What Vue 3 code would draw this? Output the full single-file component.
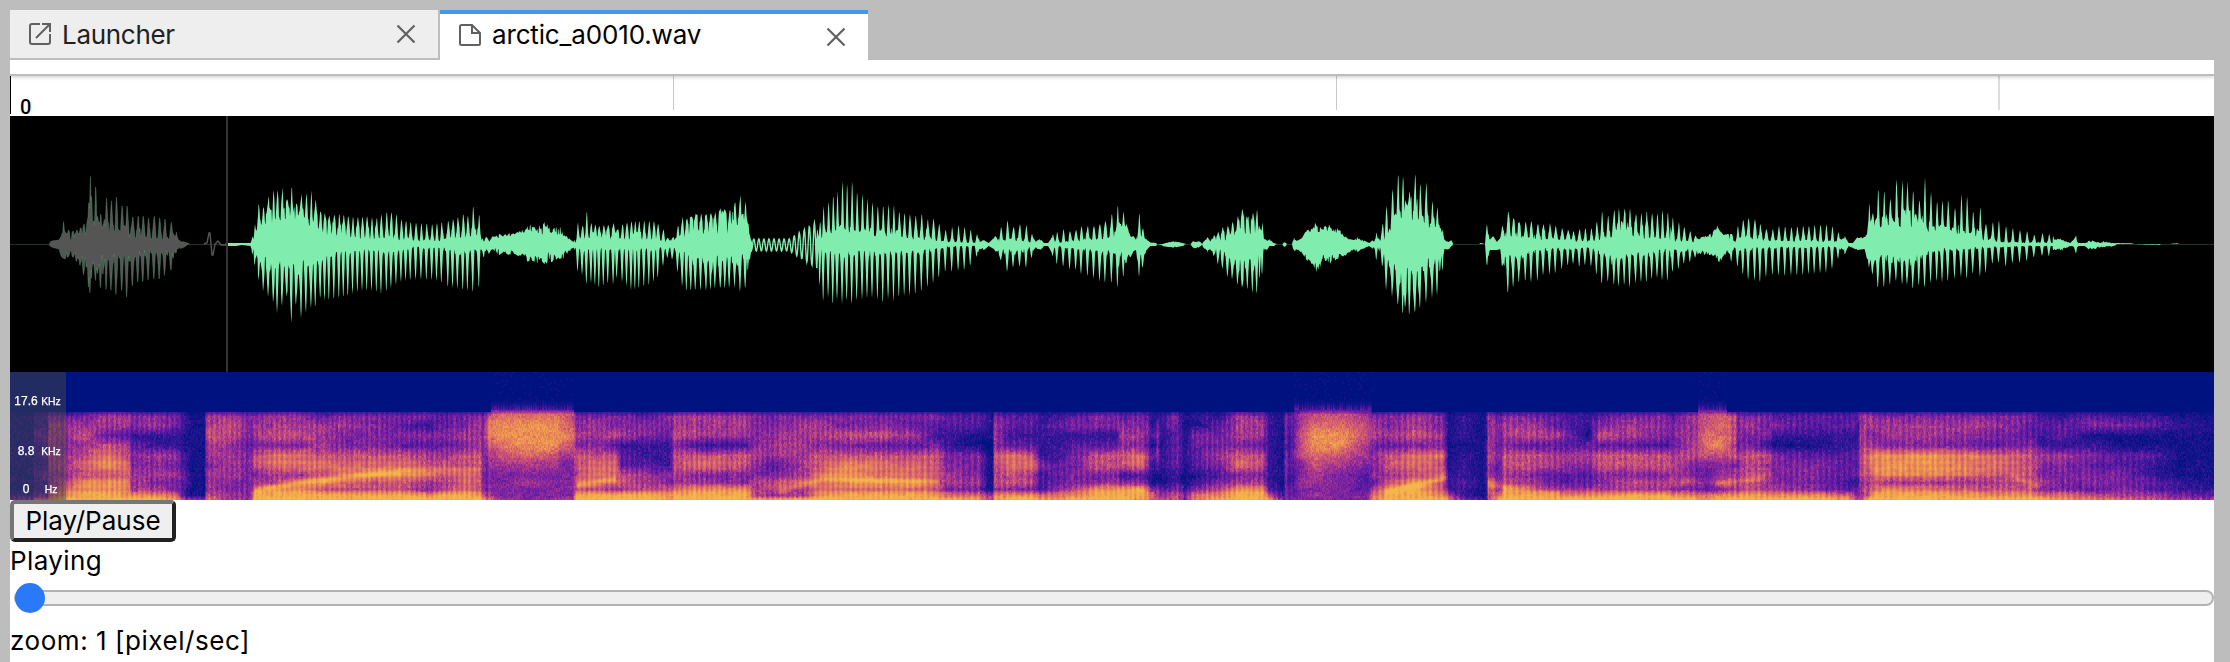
<script setup>
import { ref, onMounted } from 'vue'

const WIDTH = 2204
const waveCanvas = ref(null)
const spectrumCanvas = ref(null)

const ticks = [
  { label: '0', kind: 'first' },
  { label: '', kind: 'thin' },
  { label: '', kind: 'thin' },
  { label: '', kind: 'wide' },
]
const frequencies = [
  { value: '17.6', unit: 'KHz' },
  { value: '8.8', unit: 'KHz' },
  { value: '0', unit: 'Hz' },
]

// Envelope points "position:up/down"; each block has its own start offset.
// Positions are stored in units of 1/2.8 pixel.
const envelopeBlocks = [
  [0, '28:0/0 137:0/0 142:3/2 165:4/4 172:8/12 178:23/14 183:11/14 192:14/12 205:13/12 215:14/17 225:16/21 235:20/31 244:22/20 248:40/47 253:70/48 257:45/30 261:18/18 268:61/38 275:22/25 282:31/46 290:20/25 298:46/48 312:43/45 326:47/50 342:38/45 356:38/53 372:27/40 387:28/37 401:28/37 416:26/35 432:28/34 447:26/34 462:25/30 480:22/25 487:8/9 494:12/8 500:4/3 507:3/4 525:1/0 530:0/0 630:0/0 632:1/1 660:1/1 678:1/0 702:1/1 706:6/10 714:20/22 719:12/8 724:41/40 738:37/47 752:48/52 766:54/58 777:54/70 791:57/60 804:44/50 817:58/80 830:40/58 844:50/75 858:51/67 872:54/63 884:44/62 898:32/52 910:31/56 922:28/55 950:30/53 975:28/51 1002:27/47 1028:28/46 1055:26/47 1068:30/50 1083:32/46 1096:32/43 1110:30/40 1124:25/37 1150:22/35 1210:20/35 1237:22/38 1255:23/42 1282:27/44 1297:30/45 1310:28/46 1325:38/47 1342:30/42 1349:8/6 1355:2/14 1362:9/4 1370:2/10 1378:8/4 1395:14/14 1405:10/8 1440:13/12 1470:14/13 1482:23/21 1500:17/18 1530:25/22 1545:17/22 1560:20/15'],
  [560, '0:23/15 10:9/15 20:8/14 30:4/5 38:2/3 50:22/29 63:18/30 75:33/40 88:21/38 110:18/43 135:19/38 150:21/40 160:14/32 175:20/38 200:23/46 222:23/43 250:23/40 263:23/37 275:20/32 290:15/20 302:6/12 315:6/15 330:18/28 343:27/43 355:25/46 380:30/45 410:30/46 435:32/43 450:36/43 475:33/43 490:42/43 505:49/47 520:42/43 528:20/20 533:6/13 540:0/0 655:0/0 715:0/0 720:15/30 728:22/43 738:38/59 752:42/52 765:48/60 777:53/55 791:63/60 804:60/55 818:63/60 832:52/55 847:50/55 861:46/54 875:42/53 890:38/55 905:38/58 920:40/54 935:39/57 950:32/51 980:30/51 996:28/49 1013:30/46 1030:25/42 1046:26/38 1062:20/32 1080:14/26 1098:17/27 1116:19/26 1133:17/25 1150:14/20 1168:10/11 1176:2/4 1186:4/6 1200:1/1 1215:6/4 1235:17/16 1253:24/28 1270:17/22 1288:20/22 1306:19/23 1322:10/12 1332:2/2 1343:6/7 1355:1/1 1367:1/1 1380:10/12 1392:12/20 1410:15/22 1428:13/25 1445:14/25 1460:18/30 1478:18/31 1495:18/34 1512:20/37 1527:23/38 1545:30/38 1562:40/43'],
  [1120, '0:20/10 10:33/35 20:18/14 30:7/12 38:8/6 45:4/5 54:32/35 65:15/20 75:4/5 85:2/1 100:1/1 105:0/0 118:0/1 150:3/3 175:1/1 185:0/0 198:0/0 205:3/3 213:2/4 222:3/2 230:0/0 235:3/4 245:7/9 255:4/6 263:9/12 275:12/20 288:17/24 302:18/33 315:22/35 330:28/40 343:35/43 358:27/44 372:31/48 384:35/49 392:15/30 399:22/30 405:6/4 412:3/6 418:5/1 430:1/1 440:0/0 455:0/0 460:2/2 468:0/0 482:0/0 486:7/6 495:3/5 510:6/8 520:13/14 535:16/20 545:26/27 550:18/32 565:16/18 584:20/20 600:14/16 612:17/13 625:9/12 640:5/9 655:4/4 665:8/10 680:4/4 698:1/1 706:4/5 712:2/2 718:12/18 725:6/5 735:20/24 746:38/48 763:55/53 779:70/60 793:68/70 800:42/60 811:53/72 827:70/67 841:60/63 858:62/58 875:43/53 889:37/50 898:15/20 904:15/27 908:4/4 920:2/5 928:4/1 933:0/0 1005:0/0 1010:1/0 1022:0/0 1027:21/22 1035:4/5 1045:8/5 1055:2/5 1065:6/4 1070:18/25 1087:33/50 1102:26/42 1118:22/37 1136:22/36 1152:23/38 1170:20/36 1186:20/30 1204:21/30 1220:18/28 1238:16/24 1255:14/20 1270:13/19 1287:15/22 1303:16/20 1320:16/22 1335:22/30 1350:33/40 1367:28/36 1384:34/40 1397:36/42 1413:35/40 1428:36/43 1445:30/38 1475:33/37 1490:31/34 1505:31/33 1519:34/36 1534:32/36 1548:26/28'],
  [1670, '0:20/22 8:27/28 25:22/24 40:17/18 57:13/17 72:8/12 88:8/10 105:9/11 115:11/10 130:20/14 138:14/18 150:9/14 160:10/5 172:10/18 190:18/22 205:24/30 220:26/36 238:25/36 253:20/38 270:15/32 288:15/30 305:18/31 340:17/31 373:18/30 405:19/29 438:20/28 455:18/24 472:12/13 480:4/3 490:8/10 500:1/1 512:1/3 525:7/5 545:7/4 552:10/15 558:42/24 568:30/30 583:55/44 600:53/42 617:45/40 634:65/36 651:64/40 665:63/40 681:53/44 698:43/40 714:67/43 731:52/38 748:42/36 763:44/38 779:44/36 798:36/34 816:50/32 832:48/34 849:32/28 869:37/32 885:20/28 904:22/18 921:24/18 941:18/22 960:16/18 980:14/18 1000:13/16 1020:9/12 1043:11/11 1062:10/11 1085:7/6 1103:5/7 1120:1/1 1130:6/2 1137:9/10 1143:1/1 1160:1/1 1175:4/6 1190:4/5 1205:1/3 1215:4/2 1235:1/2 1250:1/0 1290:1/0 1300:0/0 1370:0/1 1375:0/0 1400:0/0 1420:1/0 1425:0/0 1523:0/0'],
]

// Solid part of the wave: "position:up/down" in page pixels.
const bodyText = '10:1/1 60:10/12 75:9/9 88:16/16 100:17/16 120:18/15 150:11/8 170:10/8 180:2/2 254:5/5 259:29/18 272:30/25 290:32/32 302:28/26 316:24/18 325:22/14 340:16/11 368:13/6 390:15/8 410:8/3 440:6/3 452:14/8 478:14/7 482:5/5 490:6/5 515:9/9 530:15/13 560:13/11 574:2/2 580:9/5 600:12/5 655:11/5 670:3/3 681:14/9 690:25/17 710:25/18 725:28/20 745:31/16 749:7/7 800:3/3 820:6/5 827:14/8 848:17/11 880:12/8 915:14/8 935:9/5 945:4/2 975:3/1 1000:8/8 1020:9/8 1030:4/3 1058:3/2 1082:8/5 1110:14/9 1123:18/12 1140:13/15 1150:1/1 1210:3/3 1230:14/13 1243:26/26 1255:22/16 1264:5/3 1295:4/5 1311:16/17 1328:16/15 1344:8/9 1370:2/2 1382:8/4 1390:20/20 1403:40/38 1417:38/35 1435:22/15 1446:3/3 1487:14/16 1510:20/17 1528:15/8 1550:10/5 1590:5/3 1610:15/15 1625:22/15 1660:10/7 1693:5/5 1710:8/8 1719:16/13 1735:5/3 1745:15/6 1765:8/3 1840:5/2 1863:6/6 1871:20/18 1890:26/14 1910:28/17 1924:22/15 1932:18/6 1960:16/5 1980:12/3 2000:4/2 2030:3/1 2080:1/1 2214:0/0'

function parsePairs(text, offset, scale) {
  return text.split(' ').map((item) => {
    const [pos, pair] = item.split(':')
    const [up, down] = pair.split('/').map(Number)
    return [offset + Number(pos) / scale, up, down]
  })
}

function sample(points, x) {
  let lo = 0
  let hi = points.length - 1
  while (hi - lo > 1) {
    const mid = (lo + hi) >> 1
    if (points[mid][0] <= x) lo = mid
    else hi = mid
  }
  const a = points[lo]
  const b = points[hi]
  const t = Math.max(0, Math.min(1, (x - a[0]) / (b[0] - a[0] || 1)))
  return [a[1] + (b[1] - a[1]) * t, a[2] + (b[2] - a[2]) * t]
}

function hash(x, y) {
  let h = Math.imul(x + 101, 374761393) ^ Math.imul(y + 53, 668265263)
  h = Math.imul(h ^ (h >>> 13), 1274126177)
  return ((h ^ (h >>> 16)) >>> 0) / 4294967296
}

function pitchPeriod(x) {
  if (x < 720) return 5
  if (x < 900) return 5.05
  if (x < 1110) return 5.9
  if (x < 1300) return 4.95
  if (x < 1470) return 5.6
  return 5.9
}

function fricative(x) {
  return (x > 490 && x < 574) || (x > 1293 && x < 1372) || (x > 1697 && x < 1727)
}

// Pulse centres: measured ones, with the wide gaps filled by the pitch period.
function pulseCentres(envelope) {
  const centres = []
  for (let i = 0; i < envelope.length - 1; i++) {
    const [x, up, down] = envelope[i]
    if (up < 9 && down < 9) continue
    centres.push(x)
    const gap = envelope[i + 1][0] - x
    const count = Math.round(gap / pitchPeriod(x))
    for (let n = 1; n < count; n++) centres.push(x + (gap * n) / count)
  }
  return centres
}

function drawWave(canvas) {
  const ctx = canvas.getContext('2d')
  const mid = 128
  const envelope = envelopeBlocks.flatMap(([offset, text]) => parsePairs(text, offset, 2.8))
  const body = parsePairs(bodyText, 0, 1)
  const centres = pulseCentres(envelope)
  ctx.fillStyle = '#000'
  ctx.fillRect(0, 0, WIDTH, 256)
  ctx.fillStyle = '#1d3526'
  ctx.fillRect(0, mid, WIDTH, 1)

  const top = []
  const bottom = []
  let near = 0
  for (let i = 0; i <= WIDTH * 2; i++) {
    const x = 10 + i / 2
    while (near < centres.length - 1 && Math.abs(centres[near + 1] - x) <= Math.abs(centres[near] - x)) near++
    const offset = x - centres[near]
    const side = Math.abs(offset)
    const sideDown = Math.abs(offset + 0.5)
    const [up, down] = sample(envelope, x)
    const cell = Math.floor(x)
    let [bodyUp, bodyDown] = sample(body, x)
    bodyUp = Math.min(up, bodyUp * (0.6 + 0.65 * hash(cell, 3)))
    bodyDown = Math.min(down, bodyDown * (0.55 + 0.75 * hash(cell, 9)))
    let spikeUp = Math.max(0, 1 - Math.max(0, side - 0.2) / 1.35)
    let spikeDown = Math.max(0, 1 - Math.max(0, sideDown - 0.2) / 1.6)
    if (fricative(x)) {
      spikeUp = hash(cell, 5) * 0.75
      spikeDown = hash(cell, 6) * 0.75
    } else if (up < 9 && down < 9) {
      spikeUp = 0.3 + hash(cell, 5) * 0.6
      spikeDown = 0.3 + hash(cell, 6) * 0.6
    }
    const valley = side > 1.9 && side < 4 && up > 8 && up < 34 && !fricative(x)
    const dip = valley ? 0.55 : 1
    top.push([i / 2, mid - bodyUp * dip - (up - bodyUp * dip) * spikeUp])
    bottom.push([i / 2, mid + bodyDown + (down - bodyDown) * spikeDown + (up + down > 1 ? 1 : 0)])
  }

  function paint(from, to, color) {
    ctx.save()
    ctx.beginPath()
    ctx.rect(from, 0, to - from, 256)
    ctx.clip()
    ctx.fillStyle = color
    ctx.strokeStyle = color
    ctx.beginPath()
    top.forEach(([x, y]) => ctx.lineTo(x, y))
    for (let i = bottom.length - 1; i >= 0; i--) ctx.lineTo(bottom[i][0], Math.max(bottom[i][1], top[i][1]))
    ctx.fill()

    // Quiet stretches where the single oscillations are visible.
    ctx.lineWidth = 1.4
    ctx.beginPath()
    const blip = [[194, 128], [197, 127], [199, 117], [200, 117], [202, 139], [203, 139], [205, 128], [208, 125], [211, 129], [217, 129]]
    blip.forEach(([x, y], i) => (i ? ctx.lineTo(x, y) : ctx.moveTo(x, y)))
    ctx.stroke()
    ctx.beginPath()
    for (let x = 740; x <= 807; x += 0.4) {
      const rise = x < 779 ? 6 : 6 + (x - 779) * 0.62
      const y = mid + 1 + Math.sin(((x - 740) / 5.05) * Math.PI * 2) * rise
      if (x === 740) ctx.moveTo(x, y)
      else ctx.lineTo(x, y)
    }
    ctx.stroke()
    ctx.restore()
  }
  paint(0, 216, '#555')
  ctx.globalAlpha = 0.3
  ctx.lineWidth = 1
  ctx.strokeStyle = '#5fae80'
  ctx.beginPath()
  top.slice(85, 360).forEach(([x, y]) => ctx.lineTo(x, y))
  ctx.stroke()
  ctx.beginPath()
  bottom.slice(85, 360).forEach(([x, y]) => ctx.lineTo(x, y))
  ctx.stroke()
  ctx.globalAlpha = 1
  paint(218, WIDTH, '#80edae')
  ctx.fillStyle = '#333'
  ctx.fillRect(216, 0, 2, 256)
}

// Energy columns, one digit per frequency band from high to low.
const energyRows = [20, 30, 40, 50, 60, 70, 80, 87, 94, 100, 104].map((y) => y + 23)
const energyBlocks = [
  [0, '28:11111111124 92:11111111124 95:22322232236 132:22322232236 135:45555544567 185:35545556789 240:45656768899 300:55367868899 355:55356768789 370:44234455589 430:45225454589 490:44225454478 520:22112233225 535:11111111114 572:11111111114 576:55655455567 640:56655554455 700:44434444445 712:45546645799 760:55647755899 830:55647757899 900:35556768699 960:45446777699 1050:44446786699 1130:43436786699 1200:42435675489 1230:33435665599 1300:44546677799 1345:45556666689 1352:34444444468 1363:67765444457 1400:78876544445 1480:78887545444 1560:78886544445'],
  [560, '0:77875444445 35:66765444445 45:44546667699 100:45546777699 155:44636777599 170:44523366599 240:34422355699 305:44322244688 320:55646655799 400:55526745899 520:55526644899 545:44445445558 600:44555346658 680:45555557559 720:45546677789 800:44646888799 900:44636778799 1000:43536778799 1060:43246666689 1080:33224455479 1170:33114445478 1200:22101111156 1210:11101111155 1214:45556656588 1260:33237766489 1325:33236756489 1345:22222422278 1380:23222333478 1450:34234444689 1500:44236644899 1560:44236645899'],
  [1120, '0:34546624899 60:44547734998 75:34435523788 90:21313211476 105:23434311456 115:22212211356 150:44333322466 164:33333322466 180:11112111244 205:21433312477 280:23445434689 330:55546745899 400:45536645899 415:22222222368 455:11111111124 463:44434443444 475:33223322334 505:55666445444 540:67887655454 620:67886544444 690:56655433344 705:45544443577 750:44536656899 830:55647768999 905:44547676689 918:11111122267 960:22212223224 1015:11111111112 1026:22222222222 1030:55556558766 1060:34434335478 1075:45546656899 1150:45636645699 1230:33535533589 1310:22135433589 1340:34636644589 1440:45536646599 1535:44426645599'],
  [1670, '0:34435656489 60:55556446489 100:66776434378 140:67786456489 180:66656456589 190:44435455589 215:45446666699 275:44426565589 290:34214444589 400:33213444489 500:33223332378 527:32223332345 532:55656665556 560:55457765679 570:45458886799 600:45548885899 750:45548885799 900:45437775689 1010:43346666689 1040:23225445479 1100:23325444478 1180:34124344367 1260:24113344457 1350:23113223356 1420:12111112245 1523:11111111235'],
]
// Rising or falling formant tracks: [x0, y0, x1, y1, strength].
const formants = [
  [255, 118, 292, 111, 1.6], [292, 111, 400, 99, 1.6], [400, 99, 480, 97, 1],
  [577, 113, 616, 106, 1.4], [780, 118, 820, 108, 1.2], [820, 106, 940, 110, 1.2],
  [1385, 120, 1446, 105, 1.6], [1490, 113, 1560, 121, 1], [1715, 112, 1765, 105, 1.2],
  [1870, 104, 2010, 104, -0.6], [2015, 106, 2040, 114, 1.1],
]
const palette = [
  [0, 18, 128], [28, 20, 140], [62, 23, 155], [98, 27, 163], [133, 38, 158],
  [172, 58, 140], [203, 84, 116], [225, 117, 96], [238, 153, 78], [244, 181, 74],
]

function drawSpectrum(canvas) {
  const ctx = canvas.getContext('2d')
  const image = ctx.createImageData(WIDTH, 128)
  const columns = energyBlocks.flatMap(([offset, text]) =>
    text.split(' ').map((item) => {
      const [pos, digits] = item.split(':')
      return [offset + Number(pos) / 2.8, [...digits].map(Number)]
    }),
  )
  let index = 0
  let phase = 0
  for (let px = 0; px < WIDTH; px++) {
    const x = px + 10
    phase += 1 / pitchPeriod(x)
    while (index < columns.length - 2 && columns[index + 1][0] <= x) index++
    const [x0, left] = columns[index]
    const [x1, right] = columns[index + 1]
    const t = Math.max(0, Math.min(1, (x - x0) / (x1 - x0)))
    const noisy = fricative(x)
    const edge = noisy ? 38 : 40
    const tracks = formants.filter((f) => x >= f[0] && x < f[2])
    const flicker = (hash(px >> 1, 77) - 0.5) * 0.5
    for (let y = 0; y < 128; y++) {
      const cell = y >> 1
      let value = 0
      if (y >= edge) {
        let row = 0
        while (row < energyRows.length - 2 && energyRows[row + 1] <= y) row++
        const v = Math.max(0, Math.min(1, (y - energyRows[row]) / (energyRows[row + 1] - energyRows[row])))
        const high = left[row] + (right[row] - left[row]) * t
        const low = left[row + 1] + (right[row + 1] - left[row + 1]) * t
        value = high + (low - high) * v - 0.25
        for (const [fx0, fy0, fx1, fy1, gain] of tracks) {
          const centre = fy0 + ((fy1 - fy0) * (x - fx0)) / (fx1 - fx0)
          value += gain * Math.exp(-(((y - centre) / 3) ** 2))
        }
        const grain = hash(px, cell) * 0.6 + hash(px >> 1, cell + 300) * 0.4 - 0.5
        value += grain * (value < 6 || noisy ? 1.9 : 0.8)
        value += (hash(px >> 3, (cell >> 1) + 900) - 0.5) * 0.5
        if (!noisy && value > 2) {
          value += Math.cos(phase * Math.PI * 2) * (value > 8.5 ? 0.3 : 0.55) + flicker
          if (value > 5) value += Math.cos((y / 6) * Math.PI * 2) * 0.16
        }
        if (y < edge + 4) value *= 0.55 + (y - edge) * 0.1
      } else if (noisy) {
        const haze = y > 25 ? (y - 25) / 13 : 0
        value = haze * haze * 3 * (0.4 + hash(px, 2)) + (hash(px >> 1, cell) > 0.85 ? 0.4 : 0)
      }
      value = Math.max(0, Math.min(8.99, value))
      const base = Math.floor(value)
      const mix = value - base
      const offset = (y * WIDTH + px) * 4
      for (let c = 0; c < 3; c++) {
        image.data[offset + c] = palette[base][c] + (palette[base + 1][c] - palette[base][c]) * mix
      }
      image.data[offset + 3] = 255
    }
  }
  ctx.putImageData(image, 0, 0)
}

onMounted(() => {
  drawWave(waveCanvas.value)
  drawSpectrum(spectrumCanvas.value)
})
</script>

<template>
  <div class="window">
    <div class="tabs">
      <div class="tab">
        <svg class="tab-icon" viewBox="0 0 24 24">
          <path d="M12 2H4Q2 2 2 4V20Q2 22 4 22H20Q22 22 22 20V12M14 2H22V10M22 2L8 16" />
        </svg>
        <span class="tab-title launcher-title">Launcher</span>
        <svg class="close" viewBox="0 0 20 20"><path d="M1.5 1.5L18.5 18.5M18.5 1.5L1.5 18.5" /></svg>
      </div>
      <div class="tab active">
        <svg class="tab-icon" viewBox="0 0 24 24">
          <path d="M3.5 2H14L22 10V20.5Q22 22 20.5 22H3.5Q2 22 2 20.5V3.5Q2 2 3.5 2ZM14 2V10H22" />
        </svg>
        <span class="tab-title file-title">arctic_a0010.wav</span>
        <svg class="close" viewBox="0 0 20 20"><path d="M1.5 1.5L18.5 18.5M18.5 1.5L1.5 18.5" /></svg>
      </div>
    </div>

    <div class="panel">
      <div class="toolbar"></div>
      <div class="timeline">
        <div v-for="(tick, i) in ticks" :key="i" class="tick" :class="tick.kind">
          <span>{{ tick.label }}</span>
        </div>
      </div>
      <canvas ref="waveCanvas" class="wave" width="2204" height="256"></canvas>
      <div class="spectrum">
        <canvas ref="spectrumCanvas" width="2204" height="128"></canvas>
        <div class="frequencies">
          <div v-for="item in frequencies" :key="item.value" class="frequency">
            <span class="value">{{ item.value }}</span>
            <span class="unit">{{ item.unit }}</span>
          </div>
        </div>
      </div>
      <button class="play"><span>Play/Pause</span></button>
      <div class="status"><span>Playing</span></div>
      <div class="slider">
        <div class="thumb"></div>
      </div>
      <div class="zoom"><span>zoom: 1 [pixel/sec]</span></div>
    </div>
  </div>
</template>

<style>
html,
body {
  margin: 0;
  overflow: hidden;
  background: #bdbdbd;
}
</style>

<style scoped>
.window {
  box-sizing: border-box;
  width: 2230px;
  height: 662px;
  padding: 10px 16px 0 10px;
  overflow: hidden;
  background: #bdbdbd;
  color: #000;
  font-family: Inter, Roboto, sans-serif;
  font-size: 26px;
}
.tabs {
  display: flex;
  height: 50px;
}
.tab {
  box-sizing: border-box;
  display: flex;
  align-items: center;
  width: 430px;
  height: 50px;
  padding: 0 22px 0 18px;
  border-right: 2px solid #bdbdbd;
  border-bottom: 2px solid #bdbdbd;
  background: #eee;
  color: #212121;
}
.tab.active {
  width: 428px;
  padding-right: 22px;
  border-top: 4px solid #4696ec;
  border-right: 0;
  border-bottom: 0;
  background: #fff;
  color: #000;
}
.tab-icon {
  width: 24px;
  height: 24px;
  margin-right: 10px;
  fill: none;
  stroke: #616161;
  stroke-width: 2;
}
.active .tab-icon {
  margin-top: -4px;
}
.tab-title {
  flex: 1;
  line-height: 32px;
  white-space: nowrap;
}
.launcher-title {
  margin-top: 2px;
  letter-spacing: -0.3px;
}
.file-title {
  margin-top: -4px;
  letter-spacing: -0.15px;
}
.close {
  width: 20px;
  height: 20px;
  fill: none;
  stroke: #616161;
  stroke-width: 2.2;
}
.panel {
  height: 602px;
  background: #fff;
}
.toolbar {
  height: 14px;
  border-bottom: 2px solid #bdbdbd;
  box-shadow: 0 1px 4px rgba(0, 0, 0, 0.22);
  clip-path: inset(0 0 -6px 0);
}
.timeline {
  display: grid;
  grid-template-columns: 663px 663px 662px 216px;
  height: 40px;
}
.tick {
  box-sizing: border-box;
  height: 34px;
  border-left: 1px solid #c8c8c8;
}
.tick.first {
  height: 38px;
  padding-left: 9px;
  border-left-color: #000;
  font-family: Roboto, sans-serif;
  font-size: 20px;
  font-weight: 500;
  line-height: 62px;
}
.tick.wide {
  border-left: 2px solid #ddd;
}
.wave,
.spectrum canvas {
  display: block;
}
.spectrum {
  position: relative;
  height: 128px;
}
.frequencies {
  position: absolute;
  top: 0;
  left: 0;
  display: grid;
  box-sizing: border-box;
  width: 56px;
  height: 128px;
  grid-template-rows: 50px 38px 14px;
  padding-top: 22px;
  background: rgba(68, 68, 68, 0.5);
  color: #fff;
  font-family: "Liberation Sans", Arial, sans-serif;
}
.frequency {
  display: grid;
  grid-template-columns: 24px 20px;
  column-gap: 3px;
  height: 14px;
  padding-left: 4px;
  align-items: baseline;
  text-align: center;
  line-height: 14px;
  -webkit-text-stroke: 0.25px #fff;
}
.value {
  font-size: 12px;
}
.unit {
  font-size: 10.4px;
}
.play {
  display: block;
  box-sizing: border-box;
  width: 166px;
  height: 42px;
  margin: 0;
  padding: 0;
  border: 4px solid;
  border-color: #767676 #212121 #212121 #767676;
  border-radius: 5px;
  background: #efefef;
  color: #000;
  font: inherit;
  line-height: 32px;
  white-space: nowrap;
}
.status {
  height: 36px;
  line-height: 38px;
  letter-spacing: 0.4px;
}
.slider {
  position: relative;
  box-sizing: border-box;
  height: 16px;
  margin: 12px 0 0 4px;
  border: 2px solid #b2b2b2;
  border-radius: 8px;
  background: #efefef;
}
.thumb {
  position: absolute;
  top: -9px;
  left: -1px;
  width: 30px;
  height: 30px;
  border-radius: 50%;
  background: #2979f8;
}
.zoom {
  padding-top: 18px;
  line-height: 34px;
  letter-spacing: 0.55px;
}
</style>
